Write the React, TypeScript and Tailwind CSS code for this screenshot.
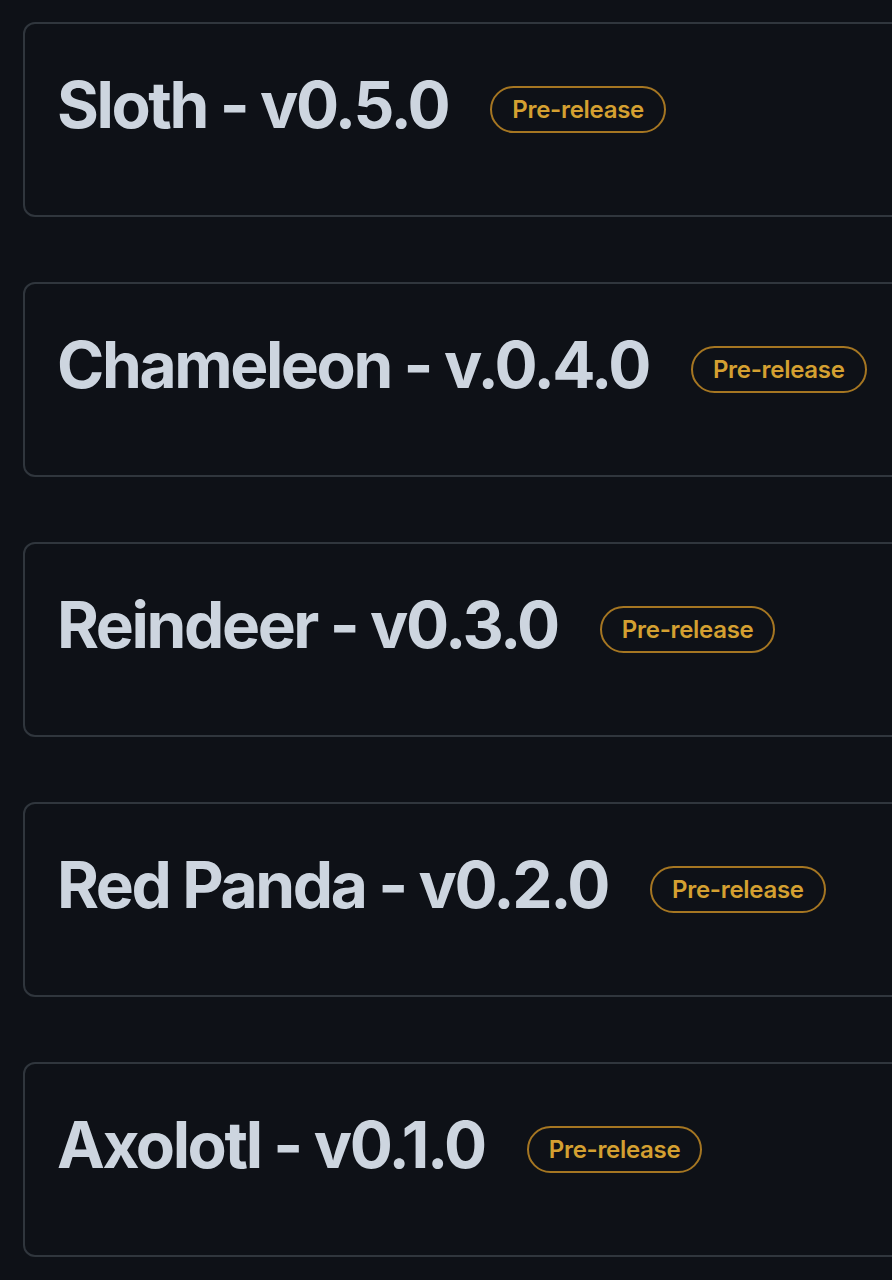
import React from "react";

const releases = [
  "Sloth - v0.5.0",
  "Chameleon - v.0.4.0",
  "Reindeer - v0.3.0",
  "Red Panda - v0.2.0",
  "Axolotl - v0.1.0",
];

export default function App() {
  return (
    <div
      className="min-h-[1280px] w-full overflow-hidden bg-[#0e1117] pl-[23px] pt-[22px]"
      style={{ fontFamily: 'Inter, "Noto Sans", sans-serif' }}
    >
      <div className="flex flex-col gap-[65px]">
        {releases.map((r) => (
          <div
            key={r}
            className="h-[195px] w-[920px] shrink-0 rounded-[12px] border-2 border-[#30363d] pl-[32px] pt-[41px]"
          >
            <div className="flex items-center">
              <h1 className="text-[64px] font-bold leading-[80px] tracking-[-2.4px] text-[#cdd5df]">
                {r}
              </h1>
              <span className="ml-[42px] mt-[9px] flex h-[47px] items-center rounded-full border-2 border-[#a57622] px-[20px] text-[24px] font-semibold tracking-[-0.3px] text-[#d4a031]">
                Pre-release
              </span>
            </div>
          </div>
        ))}
      </div>
    </div>
  );
}
